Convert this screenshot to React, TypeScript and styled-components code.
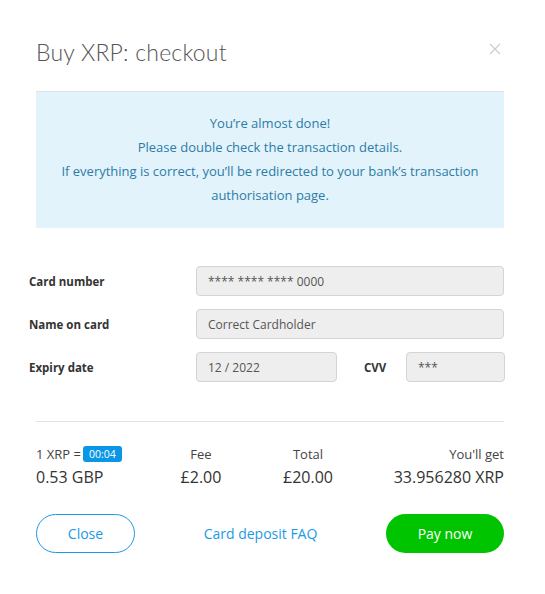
import React from "react";
import styled, { createGlobalStyle } from "styled-components";

const Global = createGlobalStyle`
  html, body { margin: 0; padding: 0; background: #fff; }
  body { font-family: "Open Sans", "Liberation Sans", sans-serif; color: #333; }
  * { box-sizing: border-box; }
`;

const Modal = styled.div`
  width: 545px;
  height: 594px;
  padding: 0 41px 0 36px;
  display: flex;
  flex-direction: column;
`;

const Header = styled.div`
  display: flex;
  align-items: center;
  justify-content: space-between;
  height: 91px;
  padding-top: 12px;
`;

const Title = styled.h1`
  margin: 0;
  font-family: "Lato", sans-serif;
  font-weight: 300;
  font-size: 23px;
  color: #555;
  letter-spacing: 0.2px;
`;

const CloseX = styled.button`
  border: 0;
  background: none;
  padding: 0;
  margin-right: 3px;
  margin-top: -6px;
  width: 12px;
  height: 12px;
  display: flex;
`;

const Notice = styled.div`
  border-top: 1px solid #e2e2e2;
  background: #e3f3fb;
  height: 137px;
  display: flex;
  flex-direction: column;
  justify-content: center;
  align-items: center;
  text-align: center;
  color: #2c7ca6;
  font-size: 13px;
  line-height: 24px;
  padding: 0 12px 2px;
`;

const Form = styled.div`
  margin: 38px 0 0 -7px;
  display: flex;
  flex-direction: column;
  gap: 13px;
`;

const Row = styled.div`
  display: grid;
  grid-template-columns: 167px 1fr;
  align-items: center;
`;

const Label = styled.label<{ $pad?: number; $w?: number }>`
  font-size: 11.5px;
  font-weight: 700;
  color: #333;
  padding-left: ${(p) => p.$pad ?? 0}px;
  ${(p) => (p.$w ? `width: ${p.$w}px;` : "")}
`;

const Input = styled.div<{ $w?: number }>`
  height: 30px;
  width: ${(p) => (p.$w ? `${p.$w}px` : "100%")};
  background: #eee;
  border: 1px solid #d4d4d4;
  border-radius: 4px;
  font-size: 12px;
  color: #555;
  display: flex;
  align-items: center;
  padding-left: 11px;
`;

const SplitRow = styled.div`
  display: flex;
  align-items: center;
`;

const Divider = styled.hr`
  border: 0;
  border-top: 1px solid #e3e3e3;
  margin: 39px 0 0;
  width: 100%;
`;

const Stats = styled.div`
  margin-top: 22px;
  display: grid;
  grid-template-columns: 130px 70px 144px 1fr;
`;

const Stat = styled.div<{ $align: string }>`
  display: flex;
  flex-direction: column;
  align-items: ${(p) => p.$align};
`;

const StatLabel = styled.div`
  font-size: 13px;
  color: #444;
  height: 20px;
  display: flex;
  align-items: center;
`;

const StatValue = styled.div`
  font-size: 16px;
  color: #333;
  margin-top: 2px;
`;

const Timer = styled.span`
  background: #0a96e6;
  color: #fff;
  font-size: 10.5px;
  border-radius: 3px;
  padding: 1px 6px;
  margin-left: 2px;
  line-height: 14px;
`;

const Actions = styled.div`
  margin-top: 26px;
  display: flex;
  align-items: center;
  justify-content: space-between;
`;

const OutlineButton = styled.button`
  width: 99px;
  height: 39px;
  border-radius: 20px;
  border: 1px solid #1a9ae6;
  background: #fff;
  color: #1a9ae6;
  font-family: inherit;
  font-size: 14px;
`;

const LinkButton = styled.a`
  color: #1a9ae6;
  font-size: 14px;
`;

const PayButton = styled.button`
  width: 118px;
  height: 39px;
  border-radius: 20px;
  border: 0;
  background: #00c400;
  color: #fff;
  font-family: inherit;
  font-size: 14px;
`;

export default function App() {
  return (
    <>
      <Global />
      <Modal>
        <Header>
          <Title>Buy XRP: checkout</Title>
          <CloseX aria-label="close">
            <svg width="12" height="12" viewBox="0 0 12 12">
              <path d="M1 1L11 11M11 1L1 11" stroke="#ccc" strokeWidth="1.2" />
            </svg>
          </CloseX>
        </Header>
        <Notice>
          <div>You’re almost done!</div>
          <div>Please double check the transaction details.</div>
          <div>If everything is correct, you’ll be redirected to your bank’s transaction authorisation page.</div>
        </Notice>
        <Form>
          <Row>
            <Label>Card number</Label>
            <Input>**** **** **** 0000</Input>
          </Row>
          <Row>
            <Label>Name on card</Label>
            <Input>Correct Cardholder</Input>
          </Row>
          <Row>
            <Label>Expiry date</Label>
            <SplitRow>
              <Input $w={141}>12 / 2022</Input>
              <Label $pad={27} $w={69}>CVV</Label>
              <Input $w={99}>***</Input>
            </SplitRow>
          </Row>
        </Form>
        <Divider />
        <Stats>
          <Stat $align="flex-start">
            <StatLabel>1 XRP =<Timer>00:04</Timer></StatLabel>
            <StatValue>0.53 GBP</StatValue>
          </Stat>
          <Stat $align="center">
            <StatLabel>Fee</StatLabel>
            <StatValue>£2.00</StatValue>
          </Stat>
          <Stat $align="center">
            <StatLabel>Total</StatLabel>
            <StatValue>£20.00</StatValue>
          </Stat>
          <Stat $align="flex-end">
            <StatLabel>You'll get</StatLabel>
            <StatValue>33.956280 XRP</StatValue>
          </Stat>
        </Stats>
        <Actions>
          <OutlineButton>Close</OutlineButton>
          <LinkButton>Card deposit FAQ</LinkButton>
          <PayButton>Pay now</PayButton>
        </Actions>
      </Modal>
    </>
  );
}
